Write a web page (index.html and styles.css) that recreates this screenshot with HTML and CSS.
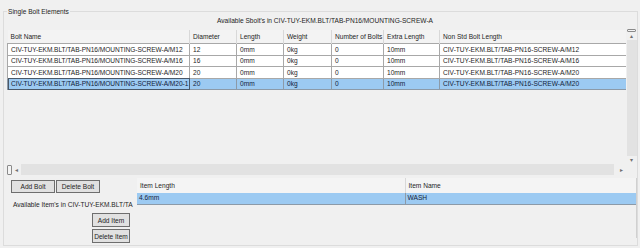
FILE: index.html
```html
<!DOCTYPE html>
<html>
<head>
<meta charset="utf-8">
<link rel="stylesheet" href="styles.css">
</head>
<body>
<fieldset class="group">
  <legend class="legend">Single Bolt Elements</legend>
  <div class="title">Available Sbolt's in CIV-TUY-EKM.BLT/TAB-PN16/MOUNTING-SCREW-A</div>
  <div class="grid-wrap">
    <div class="grid-main">
      <table class="bolts">
        <colgroup>
          <col class="c1"><col class="c2"><col class="c3"><col class="c4"><col class="c5"><col class="c6"><col class="c7">
        </colgroup>
        <thead>
          <tr><th>Bolt Name</th><th>Diameter</th><th>Length</th><th>Weight</th><th>Number of Bolts</th><th>Extra Length</th><th>Non Std Bolt Length</th></tr>
        </thead>
        <tbody>
          <tr><td>CIV-TUY-EKM.BLT/TAB-PN16/MOUNTING-SCREW-A/M12</td><td>12</td><td>0mm</td><td>0kg</td><td>0</td><td>10mm</td><td>CIV-TUY-EKM.BLT/TAB-PN16-SCREW-A/M12</td></tr>
          <tr><td>CIV-TUY-EKM.BLT/TAB-PN16/MOUNTING-SCREW-A/M16</td><td>16</td><td>0mm</td><td>0kg</td><td>0</td><td>10mm</td><td>CIV-TUY-EKM.BLT/TAB-PN16-SCREW-A/M16</td></tr>
          <tr><td>CIV-TUY-EKM.BLT/TAB-PN16/MOUNTING-SCREW-A/M20</td><td>20</td><td>0mm</td><td>0kg</td><td>0</td><td>10mm</td><td>CIV-TUY-EKM.BLT/TAB-PN16-SCREW-A/M20</td></tr>
          <tr class="sel"><td class="focus">CIV-TUY-EKM.BLT/TAB-PN16/MOUNTING-SCREW-A/M20-1</td><td>20</td><td>0mm</td><td>0kg</td><td>0</td><td>10mm</td><td>CIV-TUY-EKM.BLT/TAB-PN16-SCREW-A/M20</td></tr>
        </tbody>
      </table>
    </div>
    <div class="vscroll">
      <div class="vthumb"></div>
      <div class="arrow">&#9652;</div>
      <div class="vtrack"></div>
      <div class="arrow">&#9662;</div>
    </div>
    <div class="hscroll">
      <div class="hthumb"></div>
      <div class="harrow">&#9666;</div>
      <div class="htrack"></div>
      <div class="harrow">&#9656;</div>
    </div>
    <div class="corner"></div>
  </div>
  <div class="bottom">
    <div class="left">
      <div class="btnrow">
        <button class="btn btn-bolt">Add Bolt</button>
        <button class="btn btn-bolt">Delete Bolt</button>
      </div>
      <div class="avail">Available Item's in CIV-TUY-EKM.BLT/TA</div>
      <div class="itembtns">
        <button class="btn btn-item">Add Item</button>
        <button class="btn btn-item">Delete Item</button>
      </div>
    </div>
    <div class="items">
      <table class="itemtable">
        <colgroup><col class="i1"><col class="i2"></colgroup>
        <thead><tr><th>Item Length</th><th>Item Name</th></tr></thead>
        <tbody><tr class="sel"><td>4.6mm</td><td>WASH</td></tr></tbody>
      </table>
    </div>
  </div>
</fieldset>
</body>
</html>
```

FILE: styles.css
```css
html, body {
  margin: 0;
  padding: 0;
}
body {
  width: 640px;
  height: 248px;
  background: #f0f0f0;
  font-family: "Liberation Sans", Arial, sans-serif;
  font-size: 6.6px;
  color: #1e1e1e;
  overflow: hidden;
  padding-top: 8px;
  box-sizing: border-box;
}
.group {
  margin: 0 0 0 3px;
  width: 635px;
  height: 238px;
  box-sizing: border-box;
  border: 1px solid #dcdcdc;
  padding: 0 0 0 3px;
}
.legend {
  padding: 0 1px;
  margin-left: 0;
  font-size: 6.6px;
  color: #1e1e1e;
}
.title {
  text-align: center;
  height: 15px;
  line-height: 12px;
  padding-left: 6px;
}
.grid-wrap {
  display: grid;
  grid-template-columns: 619px 11px;
  grid-template-rows: 134px 11px;
  width: 630px;
}
.grid-main {
  overflow: hidden;
}
table {
  border-collapse: collapse;
  table-layout: fixed;
}
.bolts {
  width: 619px;
}
.c1 { width: 182px; }
.c2 { width: 47px; }
.c3 { width: 47px; }
.c4 { width: 48px; }
.c5 { width: 52px; }
.c6 { width: 56px; }
.c7 { width: 187px; }
th {
  font-weight: normal;
  text-align: left;
  height: 13px;
  padding: 0 0 0 3px;
  background: #f3f3f3;
  border-left: 1px solid #d8d8d8;
  white-space: nowrap;
  overflow: hidden;
}
th:first-child { border-left: none; }
.bolts tbody tr {
  height: 11.5px;
}
.bolts td {
  background: #fff;
  border: 1px solid #a8a8a8;
  padding: 0 0 0 3px;
  white-space: nowrap;
  overflow: hidden;
  line-height: 9px;
}
.bolts td:first-child {
  letter-spacing: -0.05px;
}
.bolts tr.sel td {
  background: #9ccaf2;
  border-color: #8c9aa8;
  color: #12223a;
}
.bolts td.focus {
  outline: 1px solid #4a5868;
  outline-offset: -1px;
}
.vscroll {
  display: flex;
  flex-direction: column;
  align-items: center;
  background: #f0f0f0;
}
.vthumb {
  width: 9px;
  height: 3px;
  border: 1px solid #8a8a8a;
  border-radius: 1px;
  background: #f4f4f4;
  box-sizing: border-box;
  margin-top: -1px;
}
.arrow {
  height: 8px;
  line-height: 8px;
  font-size: 6px;
  color: #707070;
}
.vtrack {
  flex: 1;
  width: 10px;
  background: #e2e2e2;
}
.hscroll {
  display: flex;
  align-items: center;
}
.hthumb {
  width: 3px;
  height: 8px;
  border: 1px solid #8a8a8a;
  border-radius: 1px;
  background: #f4f4f4;
  margin-left: 0;
}
.harrow {
  width: 9px;
  text-align: center;
  font-size: 6px;
  color: #707070;
}
.htrack {
  flex: 1;
  height: 11px;
  background: #e2e2e2;
  margin-right: 3px;
}
.corner {
  background: #f0f0f0;
}
.bottom {
  display: flex;
  margin-top: 3px;
}
.left {
  width: 130px;
  display: flex;
  flex-direction: column;
}
.btnrow {
  display: flex;
  gap: 1px;
  padding-left: 4px;
  margin-top: 2px;
}
.btn {
  font-family: "Liberation Sans", Arial, sans-serif;
  font-size: 6.6px;
  color: #1e1e1e;
  background: #e1e1e1;
  border: 1px solid #6e6e6e;
  height: 13px;
  padding: 0;
  line-height: 11px;
  white-space: nowrap;
}
.btn-bolt { width: 44px; }
.avail {
  margin-top: 5px;
  padding-left: 6px;
  height: 14px;
  line-height: 14px;
  white-space: nowrap;
}
.itembtns {
  display: flex;
  flex-direction: column;
  align-items: flex-end;
  gap: 2px;
  margin-top: 1px;
  padding-right: 7px;
}
.btn-item {
  width: 38px;
  height: 14px;
}
.items {
  width: 499px;
  height: 60px;
  border-right: 1px solid #d0d0d0;
}
.itemtable {
  width: 499px;
}
.i1 { width: 268px; }
.i2 { width: 231px; }
.itemtable th {
  height: 15px;
  background: #f4f4f4;
  border-left: 1px solid #d8d8d8;
}
.itemtable th:first-child { border-left: none; }
.itemtable td {
  background: #9ccaf2;
  height: 11px;
  padding: 0 0 0 2px;
  line-height: 9px;
  vertical-align: top;
  border-bottom: 1px solid #8c9aa8;
  color: #12223a;
}
.itemtable td + td {
  border-left: 1px solid #8c9aa8;
}
```
